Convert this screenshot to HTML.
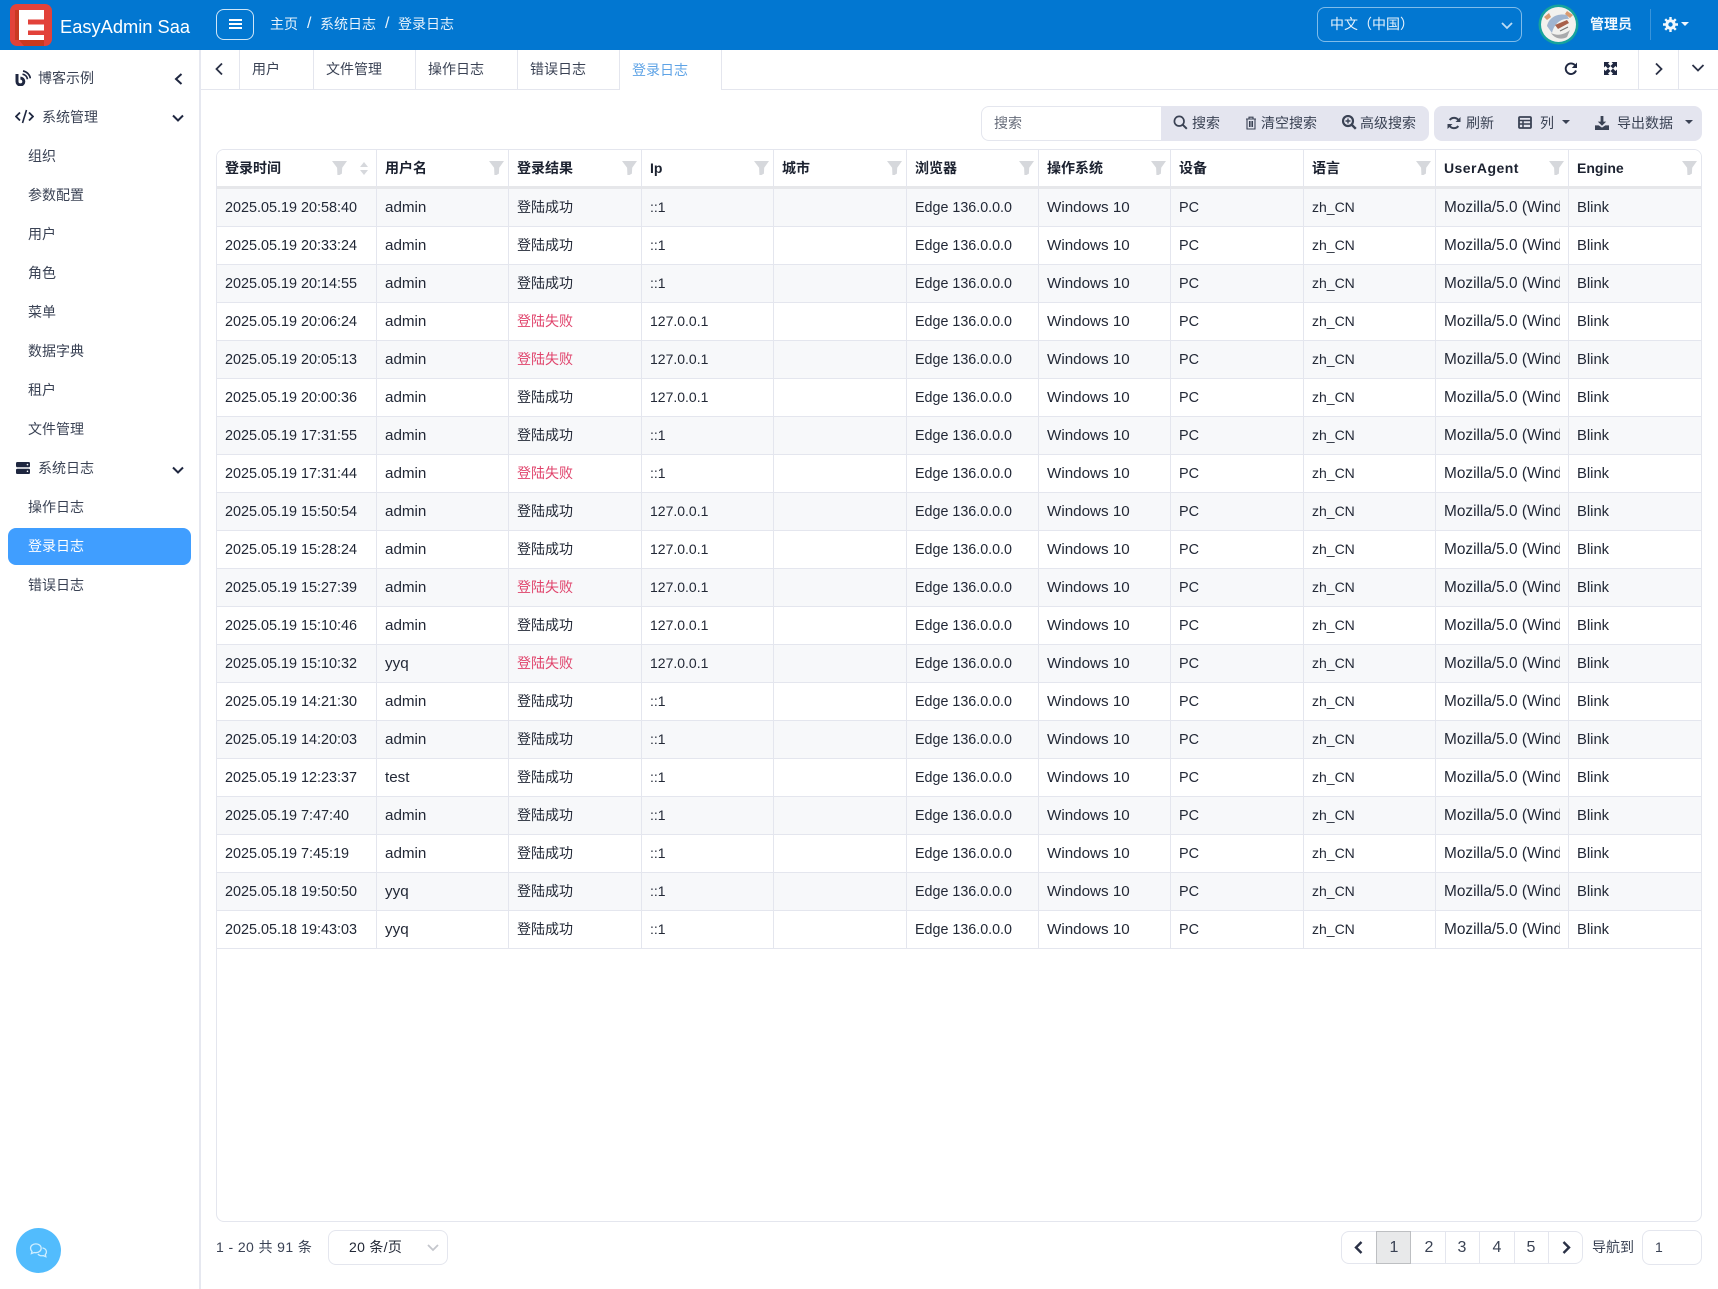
<!DOCTYPE html>
<html lang="zh-CN">
<head>
<meta charset="utf-8">
<title>登录日志</title>
<style>
*{box-sizing:border-box}
html,body{margin:0;padding:0;width:1718px;height:1289px;overflow:hidden;background:#fff}
body{font-family:"Liberation Sans","Noto Sans CJK SC",sans-serif;font-size:14px;color:#3a4254;position:relative}
.a{position:absolute;white-space:nowrap;line-height:20px}
svg{display:block}
.ic{position:absolute}
#top{position:absolute;left:0;top:0;width:1718px;height:50px;background:#0277d1}
#side{position:absolute;left:0;top:50px;width:201px;height:1239px;border-right:2px solid #e6e8f0;background:#fff}
#act{position:absolute;left:8px;top:528px;width:183px;height:37px;background:#409eff;border-radius:8px}
#tabs{position:absolute;left:201px;top:50px;width:1517px;height:40px;border-bottom:1px solid #e4e6ee}
.v{position:absolute;top:50px;width:1px;height:39px;background:#e4e6ee}
table{border-collapse:separate;border-spacing:0;table-layout:fixed;width:1484px;position:absolute;left:0;top:0}
#grid{position:absolute;left:216px;top:149px;width:1486px;height:1073px;border:1px solid #e4e6ee;border-radius:8px;overflow:hidden}
th{height:39px;padding:0 0 0 8px;text-align:left;font-size:14px;font-weight:bold;color:#1c2230;border-right:1px solid #e4e6ee;border-bottom:3px solid #e6e7ea;position:relative;background:#fff}
td{height:38px;padding:0 8px;font-size:14.4px;color:#222836;border-right:1px solid #e4e6ee;border-bottom:1px solid #e4e6ee;white-space:nowrap;background:#fff}
td div{overflow:hidden}
th:last-child,td:last-child{border-right:0}
tr:nth-child(odd) td{background:#f7f8fa}
td:nth-child(2),td:nth-child(7){font-size:15.2px}
td:nth-child(10){font-size:15.4px}
td:nth-child(4),td:nth-child(9){font-size:14px;padding-bottom:2px}
td:nth-child(6){font-size:14.3px}
td:nth-child(11){font-size:14.8px}
td.z{font-size:14px;padding-bottom:2px}
td.r{font-size:14px;color:#e0446c;padding-bottom:2px}
th.ua{letter-spacing:.45px}
.f{position:absolute;right:4px;top:11px;width:15px;height:14px;background:#d6d8dc;clip-path:polygon(0 0,100% 0,68% 48%,66% 90%,50% 100%,36% 100%,34% 48%)}
.f.g{right:29px}
.s{position:absolute;right:7px;top:12px;width:9px;height:13px}
.s:before,.s:after{content:"";position:absolute;left:0;border-left:4.5px solid transparent;border-right:4.5px solid transparent}
.s:before{top:0;border-bottom:5px solid #d6d8dc}
.s:after{bottom:0;border-top:5px solid #d6d8dc}
#inp{position:absolute;left:981px;top:106px;width:181px;height:35px;border:1px solid #e4e6ee;border-right:0;border-radius:8px 0 0 8px}
#g1{position:absolute;left:1161px;top:106px;width:268px;height:35px;background:#e4e5ef;border-radius:0 8px 8px 0}
#g2{position:absolute;left:1434px;top:106px;width:268px;height:35px;background:#e4e5ef;border-radius:8px}
.car{position:absolute;width:0;height:0;border-left:4px solid transparent;border-right:4px solid transparent;border-top:4px solid #3a4254}
#pg{position:absolute;left:1341px;top:1231px;width:242px;height:33px;border:1px solid #e4e6ee;border-radius:8px;background:#fff}
#pg i{position:absolute;top:0;width:1px;height:31px;background:#e4e6ee}
#pa{position:absolute;left:1376px;top:1231px;width:35px;height:33px;background:#e8e9ea;border:1px solid #bdbfc2}
.p{position:absolute;top:1238px;font-size:16px;line-height:20px;width:34px;text-align:center;color:#3a4254}
</style>
</head>
<body>

<div id="top"></div>
<svg class="ic" style="left:10px;top:4px" width="42" height="42" viewBox="0 0 42 42">
<rect width="42" height="42" rx="7" fill="#e2423a"/>
<path d="M9 36 L34 36 L34 42 L14 42Z" fill="#c9391f"/>
<rect x="5" y="6" width="4" height="30" fill="#c93a22"/>
<rect x="9" y="6" width="25" height="30" fill="#fff"/>
<rect x="18" y="15.500" width="16" height="5" fill="#e2423a"/>
<rect x="18" y="26.500" width="16" height="4.500" fill="#e2423a"/>
</svg>
<div class="a" style="left:60px;top:16px;font-size:18.3px;line-height:22px;color:#fff">EasyAdmin Saa</div>

<div style="position:absolute;left:216px;top:9px;width:38px;height:31px;border:1px solid #cfe6f8;border-radius:8px"></div>
<div style="position:absolute;left:229px;top:19px;width:13px;height:2px;background:#fff"></div>
<div style="position:absolute;left:229px;top:23px;width:13px;height:2px;background:#fff"></div>
<div style="position:absolute;left:229px;top:27px;width:13px;height:2px;background:#fff"></div>

<div class="a" style="left:270px;top:14px;color:#e8f3fc">主页</div>
<div class="a" style="left:307px;top:14px;color:#e8f3fc;font-size:16px">/</div>
<div class="a" style="left:320px;top:14px;color:#e8f3fc">系统日志</div>
<div class="a" style="left:385px;top:14px;color:#e8f3fc;font-size:16px">/</div>
<div class="a" style="left:398px;top:14px;color:#e8f3fc">登录日志</div>

<div style="position:absolute;left:1317px;top:7px;width:205px;height:35px;border:1px solid #7fbcea;border-radius:8px"></div>
<div class="a" style="left:1330px;top:14px;color:#e8f3fc">中文（中国）</div>
<svg class="ic" style="left:1500px;top:21px" width="14" height="10" viewBox="0 0 14 10"><path d="M2 2l5 5 5-5" fill="none" stroke="#bcdcf4" stroke-width="1.8"/></svg>

<svg class="ic" style="left:1538px;top:4px" width="41" height="41" viewBox="0 0 41 41">
<circle cx="20.5" cy="20.5" r="20" fill="#16a39c"/>
<circle cx="20.5" cy="20.5" r="17.5" fill="#f2f1ee"/>
<path d="M9 22C11 13 20 9 29 11L31 15C23 14 16 20 14 29Z" fill="#9fb4d0"/>
<path d="M6 13L11 9L13 13L9 16ZM29 7L35 11L32 14L27 10Z" fill="#d89a70"/>
<path d="M17 21L29 16L31 19L20 25Z" fill="#a8604a"/>
<path d="M13 29C19 32 26 31 32 26L29 33C24 36 17 35 13 29Z" fill="#a9a9ab"/>
<path d="M22 27l8-4" stroke="#777" stroke-width="1.200"/>
</svg>
<div class="a" style="left:1590px;top:14px;color:#f2f8fd;font-weight:bold">管理员</div>
<div style="position:absolute;left:1650px;top:9px;width:1px;height:31px;background:#3a94da"></div>
<svg class="ic" style="left:1663px;top:17px" width="15" height="15" viewBox="0 0 15 15">
<circle cx="7.5" cy="7.5" r="4.2" fill="#f2f8fd" stroke="#f2f8fd" stroke-width="2"/>
<circle cx="7.5" cy="7.5" r="2.200" fill="#0277d1"/>
<path d="M7.5 0v3M7.5 12v3M0 7.5h3M12 7.5h3M2.2 2.2l2 2M10.8 10.8l2 2M2.2 12.8l2-2M10.8 4.2l2-2" stroke="#f2f8fd" stroke-width="2.4"/>
</svg>
<div class="car" style="left:1681px;top:22px;border-top-color:#f2f8fd"></div>

<div id="side"></div>
<svg class="ic" style="left:15px;top:70px" width="16" height="16" viewBox="0 0 16 16">
<path d="M2 4v7.500a3.400 3.400 0 1 0 3.400-3.400" fill="none" stroke="#1f2740" stroke-width="3"/>
<path d="M7.500 4.200a6 6 0 0 1 5 5M8 1a9 9 0 0 1 7.400 7.400" fill="none" stroke="#1f2740" stroke-width="1.700"/>
</svg>
<div class="a" style="left:38px;top:68px">博客示例</div>
<svg class="ic" style="left:173px;top:72px" width="11" height="14" viewBox="0 0 11 14"><path d="M8.5 2L3 7l5.500 5" fill="none" stroke="#1f2740" stroke-width="2"/></svg>

<svg class="ic" style="left:15px;top:109px" width="19" height="15" viewBox="0 0 19 15">
<path d="M5 3.5L1 7.500l4 4M14 3.500l4 4-4 4" fill="none" stroke="#1f2740" stroke-width="1.800"/>
<path d="M11.500 1L7.500 14" fill="none" stroke="#1f2740" stroke-width="1.600"/>
</svg>
<div class="a" style="left:42px;top:107px">系统管理</div>
<svg class="ic" style="left:171px;top:113px" width="14" height="11" viewBox="0 0 14 11"><path d="M2 2.500l5 5 5-5" fill="none" stroke="#1f2740" stroke-width="2"/></svg>

<div class="a" style="left:28px;top:146px">组织</div>
<div class="a" style="left:28px;top:185px">参数配置</div>
<div class="a" style="left:28px;top:224px">用户</div>
<div class="a" style="left:28px;top:263px">角色</div>
<div class="a" style="left:28px;top:302px">菜单</div>
<div class="a" style="left:28px;top:341px">数据字典</div>
<div class="a" style="left:28px;top:380px">租户</div>
<div class="a" style="left:28px;top:419px">文件管理</div>

<svg class="ic" style="left:16px;top:462px" width="14" height="12" viewBox="0 0 14 12">
<rect width="14" height="5.300" rx="1.400" fill="#1f2740"/><rect y="6.700" width="14" height="5.300" rx="1.400" fill="#1f2740"/>
<circle cx="11.500" cy="2.600" r=".8" fill="#fff"/><circle cx="11.500" cy="9.300" r=".8" fill="#fff"/>
</svg>
<div class="a" style="left:38px;top:458px">系统日志</div>
<svg class="ic" style="left:171px;top:465px" width="14" height="11" viewBox="0 0 14 11"><path d="M2 2.500l5 5 5-5" fill="none" stroke="#1f2740" stroke-width="2"/></svg>

<div class="a" style="left:28px;top:497px">操作日志</div>
<div id="act"></div>
<div class="a" style="left:28px;top:536px;color:#fff">登录日志</div>
<div class="a" style="left:28px;top:575px">错误日志</div>

<div style="position:absolute;left:16px;top:1228px;width:45px;height:45px;border-radius:50%;background:#52bcfd"></div>
<svg class="ic" style="left:29px;top:1243px" width="19" height="15" viewBox="0 0 21 17">
<path d="M7.500 1C4 1 1.500 3.200 1.500 6c0 1.400.6 2.600 1.600 3.600L2.500 12l3-1.200c.7.200 1.300.2 2 .2 3.500 0 6-2.200 6-5s-2.500-5-6-5z" fill="none" stroke="#cfeeff" stroke-width="1.500"/>
<path d="M15 5.500c2.500.5 4.500 2.200 4.500 4.500 0 1.200-.5 2.200-1.300 3l.6 2.500-3-1.200c-2 .4-4.500-.2-6-1.800" fill="none" stroke="#cfeeff" stroke-width="1.500"/>
</svg>

<div id="tabs"></div>
<div class="v" style="left:239px"></div>
<div class="v" style="left:313px"></div>
<div class="v" style="left:415px"></div>
<div class="v" style="left:517px"></div>
<div class="v" style="left:619px"></div>
<div class="v" style="left:721px"></div>
<div class="v" style="left:1638px"></div>
<div class="v" style="left:1678px"></div>
<div style="position:absolute;left:620px;top:88px;width:101px;height:3px;background:#fff"></div>
<svg class="ic" style="left:213px;top:62px" width="12" height="14" viewBox="0 0 12 14"><path d="M9 1.500L3.500 7l5.500 5.500" fill="none" stroke="#2a3146" stroke-width="1.800"/></svg>
<div class="a" style="left:252px;top:59px">用户</div>
<div class="a" style="left:326px;top:59px">文件管理</div>
<div class="a" style="left:428px;top:59px">操作日志</div>
<div class="a" style="left:530px;top:59px">错误日志</div>
<div class="a" style="left:632px;top:60px;color:#5ea3e6">登录日志</div>

<svg class="ic" style="left:1564px;top:62px" width="14" height="14" viewBox="0 0 14 14">
<path d="M12 8.500A5.300 5.300 0 1 1 10.800 3" fill="none" stroke="#1f2740" stroke-width="1.900"/>
<path d="M13 .5V6H7.800z" fill="#1f2740"/>
</svg>
<svg class="ic" style="left:1604px;top:62px" width="13" height="13" viewBox="0 0 13 13">
<path d="M0 0h5.500L4 1.500 6.500 4 4 6.500 1.500 4 0 5.500zM13 0v5.500L11.500 4 9 6.500 6.500 4 9 1.500 7.500 0zM0 13V7.500L1.500 9 4 6.500 6.500 9 4 11.500 5.500 13zM13 13H7.500L9 11.500 6.500 9 9 6.500 11.500 9 13 7.500z" fill="#1f2740"/>
</svg>
<svg class="ic" style="left:1653px;top:62px" width="12" height="14" viewBox="0 0 12 14"><path d="M3 1.500L8.500 7 3 12.500" fill="none" stroke="#2a3146" stroke-width="1.800"/></svg>
<svg class="ic" style="left:1691px;top:63px" width="14" height="11" viewBox="0 0 14 11"><path d="M1.500 2l5.500 5.500L12.500 2" fill="none" stroke="#2a3146" stroke-width="1.800"/></svg>

<div id="inp"></div>
<div class="a" style="left:994px;top:113px;color:#666c7a">搜索</div>
<div id="g1"></div>
<svg class="ic" style="left:1173px;top:115px" width="15" height="15" viewBox="0 0 15 15"><circle cx="6.200" cy="6.200" r="4.800" fill="none" stroke="#3a4254" stroke-width="1.700"/><path d="M9.800 9.800l4 4" stroke="#3a4254" stroke-width="2"/></svg>
<div class="a" style="left:1192px;top:113px">搜索</div>
<svg class="ic" style="left:1245px;top:116px" width="12" height="14" viewBox="0 0 12 14"><path d="M1 3h10M4 3V1.200h4V3M2 3v10h8V3M4.500 5v6M6 5v6M7.500 5v6" fill="none" stroke="#3a4254" stroke-width="1.100"/></svg>
<div class="a" style="left:1261px;top:113px">清空搜索</div>
<svg class="ic" style="left:1342px;top:115px" width="15" height="15" viewBox="0 0 15 15"><circle cx="6" cy="6" r="5" fill="none" stroke="#3a4254" stroke-width="2.200"/><path d="M9.800 9.800l4 4" stroke="#3a4254" stroke-width="2.400"/><path d="M6 3.500v5M3.500 6h5" stroke="#3a4254" stroke-width="1.400"/></svg>
<div class="a" style="left:1360px;top:113px">高级搜索</div>

<div id="g2"></div>
<svg class="ic" style="left:1447px;top:116px" width="14" height="14" viewBox="0 0 14 14"><path d="M12 5.500A5.300 5.300 0 0 0 2.700 4M2 8.500A5.300 5.300 0 0 0 11.300 10" fill="none" stroke="#3a4254" stroke-width="2"/><path d="M13.500 1v5h-5zM.5 13V8h5z" fill="#3a4254"/></svg>
<div class="a" style="left:1466px;top:113px">刷新</div>
<svg class="ic" style="left:1518px;top:116px" width="14" height="13" viewBox="0 0 14 13"><rect x="1" y="1" width="12" height="11" rx="1" fill="none" stroke="#3a4254" stroke-width="1.800"/><path d="M1 4.500h12M1 8h12M5 4v8" stroke="#3a4254" stroke-width="1.500"/></svg>
<div class="a" style="left:1540px;top:113px">列</div>
<div class="car" style="left:1562px;top:120px"></div>
<svg class="ic" style="left:1595px;top:116px" width="14" height="14" viewBox="0 0 15 15"><path d="M6 0h3v6h3L7.500 10.500 3 6h3z" fill="#3a4254"/><path d="M0 10h4l3.500 2.500L11 10h4v5H0z" fill="#3a4254"/></svg>
<div class="a" style="left:1617px;top:113px">导出数据</div>
<div class="car" style="left:1685px;top:120px"></div>

<div id="grid">
<table>
<colgroup><col style="width:160px"><col style="width:132px"><col style="width:133px"><col style="width:132px"><col style="width:133px"><col style="width:132px"><col style="width:132px"><col style="width:133px"><col style="width:132px"><col style="width:133px"><col style="width:132px"></colgroup>
<thead><tr>
<th>登录时间<span class="f g"></span><span class="s"></span></th>
<th>用户名<span class="f"></span></th>
<th>登录结果<span class="f"></span></th>
<th>Ip<span class="f"></span></th>
<th>城市<span class="f"></span></th>
<th>浏览器<span class="f"></span></th>
<th>操作系统<span class="f"></span></th>
<th>设备</th>
<th>语言<span class="f"></span></th>
<th class="ua">UserAgent<span class="f"></span></th>
<th>Engine<span class="f"></span></th>
</tr></thead>
<tbody>
<tr><td>2025.05.19 20:58:40</td><td>admin</td><td class="z">登陆成功</td><td>::1</td><td></td><td>Edge 136.0.0.0</td><td>Windows 10</td><td>PC</td><td>zh_CN</td><td><div>Mozilla/5.0 (Windows NT 10.0; Win64; x64)</div></td><td>Blink</td></tr>
<tr><td>2025.05.19 20:33:24</td><td>admin</td><td class="z">登陆成功</td><td>::1</td><td></td><td>Edge 136.0.0.0</td><td>Windows 10</td><td>PC</td><td>zh_CN</td><td><div>Mozilla/5.0 (Windows NT 10.0; Win64; x64)</div></td><td>Blink</td></tr>
<tr><td>2025.05.19 20:14:55</td><td>admin</td><td class="z">登陆成功</td><td>::1</td><td></td><td>Edge 136.0.0.0</td><td>Windows 10</td><td>PC</td><td>zh_CN</td><td><div>Mozilla/5.0 (Windows NT 10.0; Win64; x64)</div></td><td>Blink</td></tr>
<tr><td>2025.05.19 20:06:24</td><td>admin</td><td class="r">登陆失败</td><td>127.0.0.1</td><td></td><td>Edge 136.0.0.0</td><td>Windows 10</td><td>PC</td><td>zh_CN</td><td><div>Mozilla/5.0 (Windows NT 10.0; Win64; x64)</div></td><td>Blink</td></tr>
<tr><td>2025.05.19 20:05:13</td><td>admin</td><td class="r">登陆失败</td><td>127.0.0.1</td><td></td><td>Edge 136.0.0.0</td><td>Windows 10</td><td>PC</td><td>zh_CN</td><td><div>Mozilla/5.0 (Windows NT 10.0; Win64; x64)</div></td><td>Blink</td></tr>
<tr><td>2025.05.19 20:00:36</td><td>admin</td><td class="z">登陆成功</td><td>127.0.0.1</td><td></td><td>Edge 136.0.0.0</td><td>Windows 10</td><td>PC</td><td>zh_CN</td><td><div>Mozilla/5.0 (Windows NT 10.0; Win64; x64)</div></td><td>Blink</td></tr>
<tr><td>2025.05.19 17:31:55</td><td>admin</td><td class="z">登陆成功</td><td>::1</td><td></td><td>Edge 136.0.0.0</td><td>Windows 10</td><td>PC</td><td>zh_CN</td><td><div>Mozilla/5.0 (Windows NT 10.0; Win64; x64)</div></td><td>Blink</td></tr>
<tr><td>2025.05.19 17:31:44</td><td>admin</td><td class="r">登陆失败</td><td>::1</td><td></td><td>Edge 136.0.0.0</td><td>Windows 10</td><td>PC</td><td>zh_CN</td><td><div>Mozilla/5.0 (Windows NT 10.0; Win64; x64)</div></td><td>Blink</td></tr>
<tr><td>2025.05.19 15:50:54</td><td>admin</td><td class="z">登陆成功</td><td>127.0.0.1</td><td></td><td>Edge 136.0.0.0</td><td>Windows 10</td><td>PC</td><td>zh_CN</td><td><div>Mozilla/5.0 (Windows NT 10.0; Win64; x64)</div></td><td>Blink</td></tr>
<tr><td>2025.05.19 15:28:24</td><td>admin</td><td class="z">登陆成功</td><td>127.0.0.1</td><td></td><td>Edge 136.0.0.0</td><td>Windows 10</td><td>PC</td><td>zh_CN</td><td><div>Mozilla/5.0 (Windows NT 10.0; Win64; x64)</div></td><td>Blink</td></tr>
<tr><td>2025.05.19 15:27:39</td><td>admin</td><td class="r">登陆失败</td><td>127.0.0.1</td><td></td><td>Edge 136.0.0.0</td><td>Windows 10</td><td>PC</td><td>zh_CN</td><td><div>Mozilla/5.0 (Windows NT 10.0; Win64; x64)</div></td><td>Blink</td></tr>
<tr><td>2025.05.19 15:10:46</td><td>admin</td><td class="z">登陆成功</td><td>127.0.0.1</td><td></td><td>Edge 136.0.0.0</td><td>Windows 10</td><td>PC</td><td>zh_CN</td><td><div>Mozilla/5.0 (Windows NT 10.0; Win64; x64)</div></td><td>Blink</td></tr>
<tr><td>2025.05.19 15:10:32</td><td>yyq</td><td class="r">登陆失败</td><td>127.0.0.1</td><td></td><td>Edge 136.0.0.0</td><td>Windows 10</td><td>PC</td><td>zh_CN</td><td><div>Mozilla/5.0 (Windows NT 10.0; Win64; x64)</div></td><td>Blink</td></tr>
<tr><td>2025.05.19 14:21:30</td><td>admin</td><td class="z">登陆成功</td><td>::1</td><td></td><td>Edge 136.0.0.0</td><td>Windows 10</td><td>PC</td><td>zh_CN</td><td><div>Mozilla/5.0 (Windows NT 10.0; Win64; x64)</div></td><td>Blink</td></tr>
<tr><td>2025.05.19 14:20:03</td><td>admin</td><td class="z">登陆成功</td><td>::1</td><td></td><td>Edge 136.0.0.0</td><td>Windows 10</td><td>PC</td><td>zh_CN</td><td><div>Mozilla/5.0 (Windows NT 10.0; Win64; x64)</div></td><td>Blink</td></tr>
<tr><td>2025.05.19 12:23:37</td><td>test</td><td class="z">登陆成功</td><td>::1</td><td></td><td>Edge 136.0.0.0</td><td>Windows 10</td><td>PC</td><td>zh_CN</td><td><div>Mozilla/5.0 (Windows NT 10.0; Win64; x64)</div></td><td>Blink</td></tr>
<tr><td>2025.05.19 7:47:40</td><td>admin</td><td class="z">登陆成功</td><td>::1</td><td></td><td>Edge 136.0.0.0</td><td>Windows 10</td><td>PC</td><td>zh_CN</td><td><div>Mozilla/5.0 (Windows NT 10.0; Win64; x64)</div></td><td>Blink</td></tr>
<tr><td>2025.05.19 7:45:19</td><td>admin</td><td class="z">登陆成功</td><td>::1</td><td></td><td>Edge 136.0.0.0</td><td>Windows 10</td><td>PC</td><td>zh_CN</td><td><div>Mozilla/5.0 (Windows NT 10.0; Win64; x64)</div></td><td>Blink</td></tr>
<tr><td>2025.05.18 19:50:50</td><td>yyq</td><td class="z">登陆成功</td><td>::1</td><td></td><td>Edge 136.0.0.0</td><td>Windows 10</td><td>PC</td><td>zh_CN</td><td><div>Mozilla/5.0 (Windows NT 10.0; Win64; x64)</div></td><td>Blink</td></tr>
<tr><td>2025.05.18 19:43:03</td><td>yyq</td><td class="z">登陆成功</td><td>::1</td><td></td><td>Edge 136.0.0.0</td><td>Windows 10</td><td>PC</td><td>zh_CN</td><td><div>Mozilla/5.0 (Windows NT 10.0; Win64; x64)</div></td><td>Blink</td></tr>
</tbody>
</table>
</div>

<div class="a" style="left:216px;top:1237px;letter-spacing:.4px">1 - 20 共 91 条</div>
<div style="position:absolute;left:328px;top:1230px;width:120px;height:35px;border:1px solid #e4e6ee;border-radius:8px"></div>
<div class="a" style="left:349px;top:1237px;color:#222836;letter-spacing:.3px">20 条/页</div>
<svg class="ic" style="left:426px;top:1243px" width="14" height="10" viewBox="0 0 14 10"><path d="M2 2l5 5 5-5" fill="none" stroke="#c4c6cc" stroke-width="1.800"/></svg>

<div id="pg"><i style="left:34px"></i><i style="left:103px"></i><i style="left:137px"></i><i style="left:172px"></i><i style="left:206px"></i></div>
<div id="pa"></div>
<svg class="ic" style="left:1353px;top:1240px" width="11" height="15" viewBox="0 0 11 15"><path d="M8.500 2L3 7.500 8.500 13" fill="none" stroke="#2a3146" stroke-width="2.400"/></svg>
<div class="p" style="left:1377px">1</div>
<div class="p" style="left:1412px">2</div>
<div class="p" style="left:1445px">3</div>
<div class="p" style="left:1480px">4</div>
<div class="p" style="left:1514px">5</div>
<svg class="ic" style="left:1561px;top:1240px" width="11" height="15" viewBox="0 0 11 15"><path d="M2.500 2L8 7.500 2.500 13" fill="none" stroke="#2a3146" stroke-width="2.400"/></svg>
<div class="a" style="left:1592px;top:1237px">导航到</div>
<div style="position:absolute;left:1642px;top:1230px;width:60px;height:35px;border:1px solid #e4e6ee;border-radius:8px"></div>
<div class="a" style="left:1655px;top:1237px">1</div>

</body>
</html>
